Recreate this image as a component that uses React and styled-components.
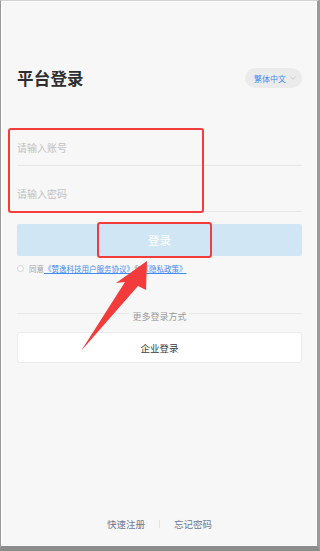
import styled, { createGlobalStyle } from "styled-components";

const GlobalStyle = createGlobalStyle`
  * { box-sizing: border-box; }
  html, body { margin: 0; padding: 0; background: #8c8c8c; }
  body {
    font-family: "Noto Sans CJK SC", "Noto Sans", sans-serif;
  }
`;

const App = () => {
  return (
    <>
      <GlobalStyle />
      <StyledFrame>
        <StyledScreen>
          <StyledHeader>
            <StyledTitle>平台登录</StyledTitle>
            <StyledLangPill>
              繁体中文
              <svg width="6" height="4" viewBox="0 0 6 4">
                <path d="M0.5 0.8 L3 3.2 L5.5 0.8" fill="none" stroke="#c4c4c4" strokeWidth="0.9" />
              </svg>
            </StyledLangPill>
          </StyledHeader>

          <StyledForm>
            <StyledField>
              <StyledInput placeholder="请输入账号" />
            </StyledField>
            <StyledField>
              <StyledInput type="password" placeholder="请输入密码" />
            </StyledField>
          </StyledForm>

          <StyledLoginButton>登录</StyledLoginButton>

          <StyledAgreement>
            <StyledRadio />
            <span>同意</span>
            <StyledLink>《赞逸科技用户服务协议》</StyledLink>
            <span>和</span>
            <StyledLink>《隐私政策》</StyledLink>
          </StyledAgreement>

          <StyledDivider>
            <StyledDividerLabel>更多登录方式</StyledDividerLabel>
          </StyledDivider>

          <StyledOutlineButton>企业登录</StyledOutlineButton>

          <StyledFooter>
            <StyledFooterLink>快速注册</StyledFooterLink>
            <StyledSeparator />
            <StyledFooterLink>忘记密码</StyledFooterLink>
          </StyledFooter>

          {/* annotation marks drawn over the screenshot */}
          <StyledMark $left={8} $top={128} $width={196} $height={85} />
          <StyledMark $left={97} $top={222} $width={115} $height={36} />
          <StyledArrow width="320" height="551" viewBox="0 0 320 551">
            <polygon
              points="147,261 146,290 138,286 81,351 125,282 116,283"
              fill="#f23b3b"
            />
          </StyledArrow>
        </StyledScreen>
      </StyledFrame>
    </>
  );
};

// Styles
const StyledFrame = styled.div`
  width: 320px;
  height: 551px;
  border-top: 1px solid #d2d2d2;
  border-left: 1px solid #9a9a9a;
  border-right: 3px solid #9a9a9a;
  border-bottom: 5px solid #8c8c8c;
`;

const StyledScreen = styled.div`
  position: relative;
  height: 100%;
  display: flex;
  flex-direction: column;
  padding: 0 14px 0 15px;
  background: #f7f7f7;
  border: 1px solid #ffffff;
`;

const StyledHeader = styled.div`
  display: flex;
  align-items: center;
  justify-content: space-between;
  height: 20px;
  margin-top: 66px;
`;

const StyledTitle = styled.h1`
  margin: 0;
  font-size: 16.5px;
  font-weight: 700;
  color: #2e2e2e;
  letter-spacing: 0.2px;
`;

const StyledLangPill = styled.div`
  display: flex;
  align-items: center;
  gap: 4px;
  height: 20px;
  padding: 0 6px 0 9px;
  border-radius: 10px;
  background: #ebebeb;
  font-size: 8px;
  color: #3d8cf2;
`;

const StyledForm = styled.div`
  display: flex;
  flex-direction: column;
  margin-top: 32px;
`;

const StyledField = styled.div`
  display: flex;
  align-items: flex-end;
  height: 46px;
  padding-bottom: 11px;
  border-bottom: 1px solid #e6e6e6;
`;

const StyledInput = styled.input`
  width: 100%;
  height: 14px;
  padding: 0;
  border: none;
  outline: none;
  background: transparent;
  font-family: inherit;
  font-size: 10px;
  color: #333;

  &::placeholder {
    color: #c2c2c2;
  }
`;

const StyledLoginButton = styled.div`
  display: flex;
  align-items: center;
  justify-content: center;
  height: 32px;
  margin-top: 12px;
  border-radius: 2px;
  background: #d1e6f5;
  color: #ffffff;
  font-size: 11.5px;
`;

const StyledAgreement = styled.div`
  display: flex;
  align-items: center;
  height: 10px;
  margin-top: 7px;
  font-size: 7.5px;
  color: #a3a3a3;
  white-space: nowrap;
`;

const StyledRadio = styled.span`
  width: 7px;
  height: 7px;
  margin-right: 5px;
  border: 1px solid #d4d4d4;
  border-radius: 50%;
  background: #fff;
`;

const StyledLink = styled.span`
  color: #3d8cf2;
  text-decoration: underline;
  text-underline-offset: 1px;
`;

const StyledDivider = styled.div`
  display: flex;
  justify-content: center;
  height: 8px;
  margin-top: 40px;
  border-top: 1px solid #e9e9e9;
`;

const StyledDividerLabel = styled.span`
  height: 11px;
  margin-top: -3px;
  padding: 0 2px;
  background: #f7f7f7;
  font-size: 9px;
  line-height: 11px;
  color: #9b9b9b;
`;

const StyledOutlineButton = styled.div`
  display: flex;
  align-items: center;
  justify-content: center;
  height: 31px;
  margin-top: 11px;
  border: 1px solid #ececec;
  border-radius: 3px;
  background: #ffffff;
  color: #3a3a3a;
  font-size: 9.5px;
`;

const StyledFooter = styled.div`
  display: flex;
  align-items: center;
  justify-content: center;
  gap: 14px;
  margin-top: auto;
  margin-bottom: 15px;
  height: 12px;
`;

const StyledFooterLink = styled.span`
  font-size: 9.5px;
  color: #6b7896;
`;

const StyledSeparator = styled.span`
  width: 1px;
  height: 8px;
  background: #e3e3e3;
`;

const StyledMark = styled.div`
  position: absolute;
  left: ${(p) => p.$left - 2}px;
  top: ${(p) => p.$top - 2}px;
  width: ${(p) => p.$width}px;
  height: ${(p) => p.$height}px;
  border: 2px solid #f33c3c;
  border-radius: 3px;
`;

const StyledArrow = styled.svg`
  position: absolute;
  left: -2px;
  top: -2px;
  pointer-events: none;
`;

export default App;
